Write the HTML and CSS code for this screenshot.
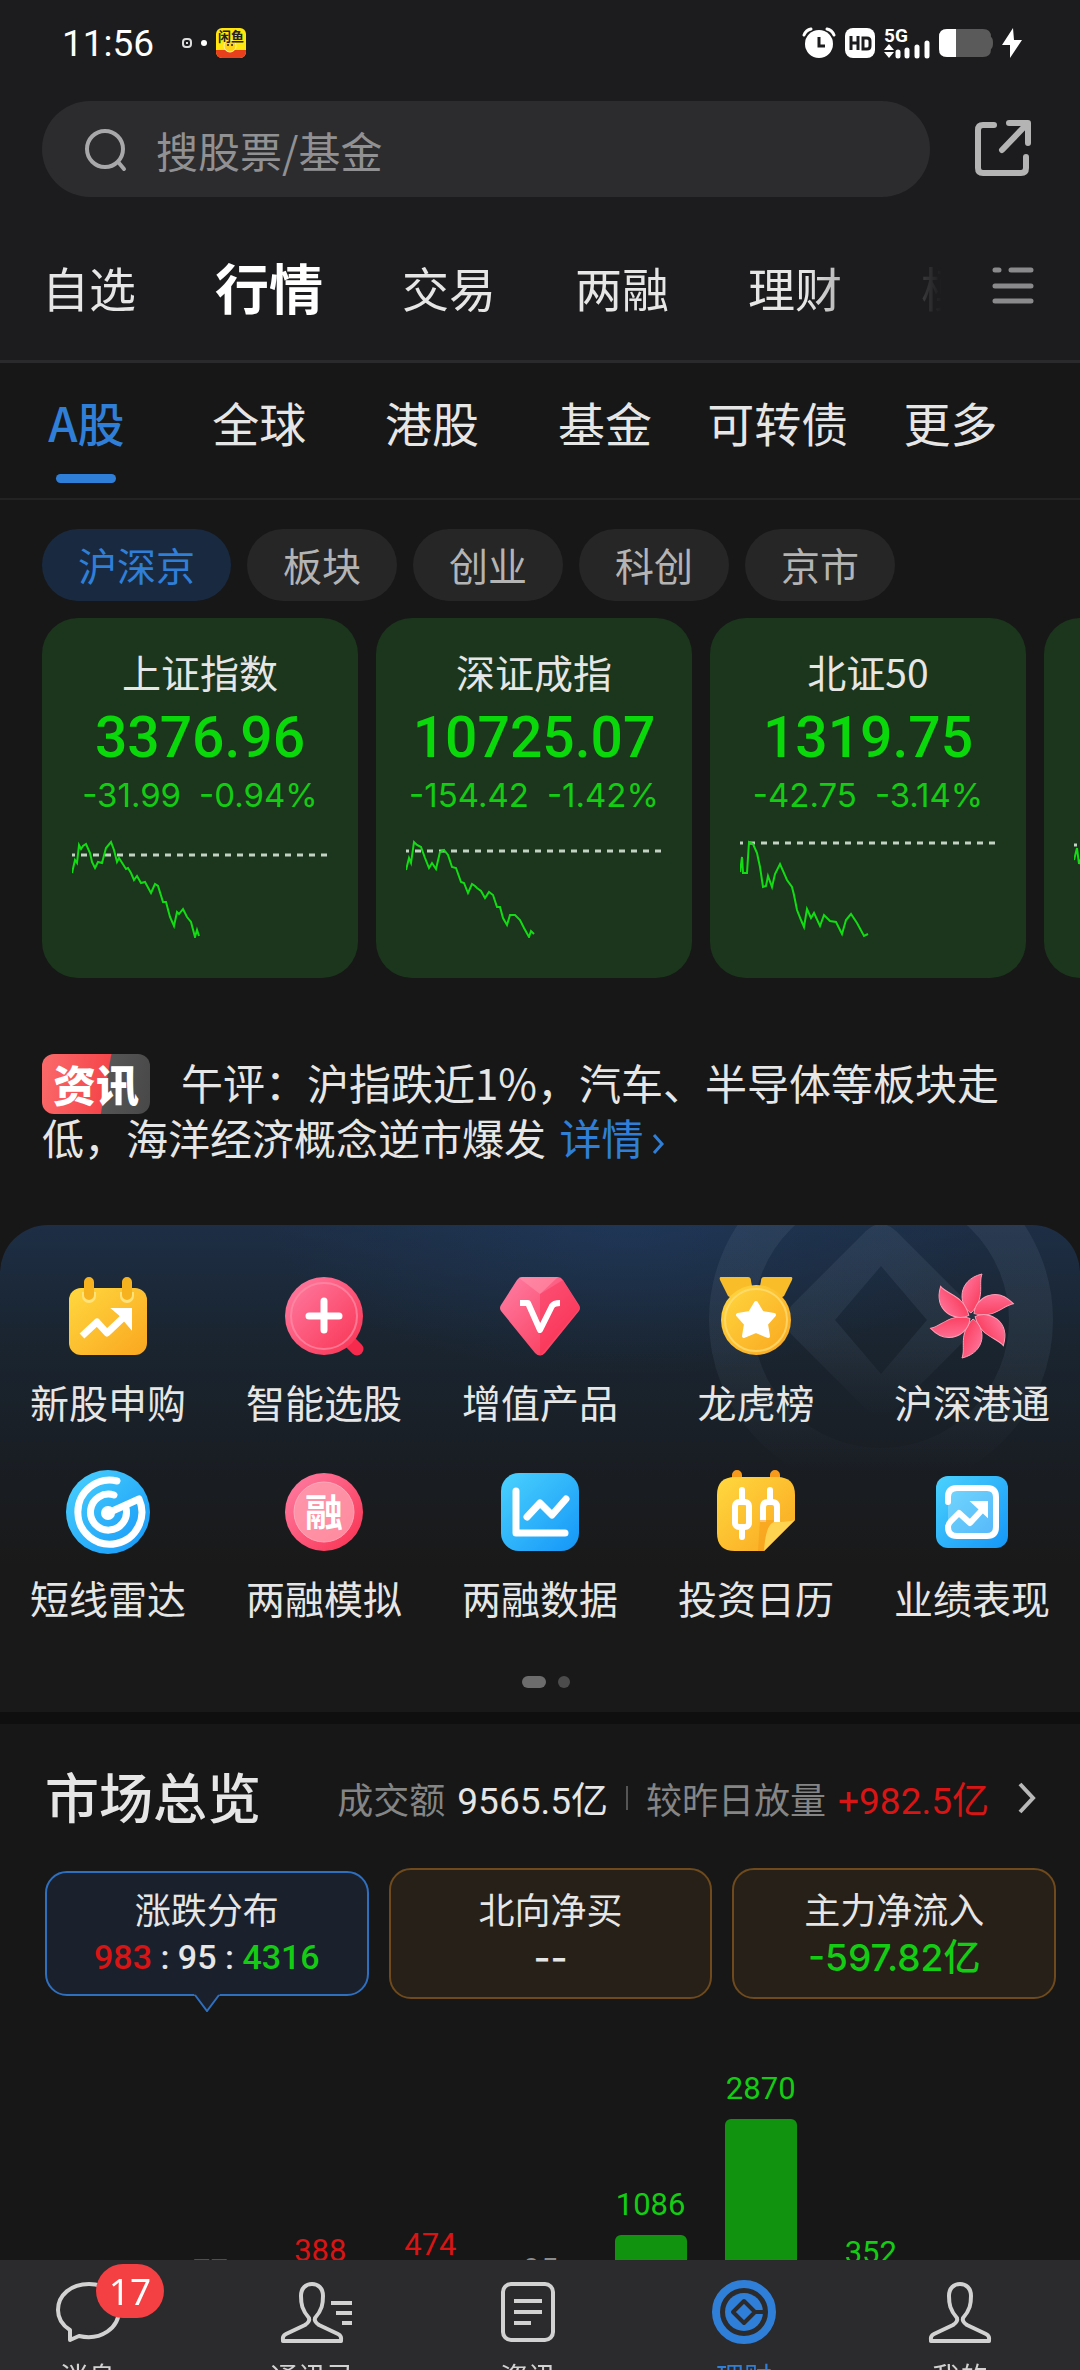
FILE: index.html
```html
<!DOCTYPE html>
<html lang="zh-CN">

<head>
    <meta charset="UTF-8">
    <meta name="viewport" content="width=device-width, initial-scale=1.0">
    <title>行情</title>
    <link rel="stylesheet" href="styles.css">
</head>

<body>
    <header class="header">
        <div class="status">
            <span class="time">11:56</span>
            <svg class="notice" width="68" height="30" viewBox="0 0 68 30">
                <rect x="1" y="11" width="8" height="8" rx="3" fill="none" stroke="#ddd" stroke-width="2" />
                <rect x="4" y="14" width="2" height="2" fill="#ddd" />
                <circle cx="22" cy="15" r="3" fill="#fff" />
                <rect x="34" y="0" width="30" height="30" rx="6" fill="#ffe60f" />
                <path d="M34 22h30v2a6 6 0 0 1-6 6H40a6 6 0 0 1-6-6z" fill="#e8401c" />
                <circle cx="48" cy="18" r="6" fill="#ffd21a" stroke="#fff6b0" />
                <circle cx="46" cy="17" r="1" fill="#222" />
                <circle cx="50" cy="17" r="1" fill="#222" />
                <text x="49" y="13" class="app-name">闲鱼</text>
            </svg>
            <div class="status-right">
                <svg width="34" height="32" viewBox="0 0 34 32">
                    <circle cx="17" cy="17" r="14" fill="#fff" />
                    <path d="M2 8Q4 3 9 2M32 8Q30 3 25 2" fill="none" stroke="#fff" stroke-width="3" stroke-linecap="round" />
                    <path d="M17 10v9h6" fill="none" stroke="#1c1c1e" stroke-width="3" />
                </svg>
                <svg width="30" height="30" viewBox="0 0 30 30">
                    <rect width="30" height="30" rx="8" fill="#fff" />
                    <path d="M6 8v14M13 8v14M6 15h7M18 10h4q3 0 3 3v5q0 3-3 3h-4z" fill="none" stroke="#1c1c1e" stroke-width="3" />
                </svg>
                <svg width="46" height="32" viewBox="0 0 46 32">
                    <text x="0" y="15" class="net">5G</text>
                    <path d="M0 23l5-6 5 6zM0 25l5 6 5-6z" fill="#fff" />
                    <path d="M14 25v4M23 23v6M33 20v9M43 16v13" stroke="#fff" stroke-width="5" stroke-linecap="round" />
                </svg>
                <svg width="54" height="28" viewBox="0 0 54 28">
                    <path d="M8 0h36q8 0 8 8q2 1 2 6t-2 6q0 8-8 8H8q-8 0-8-8V8q0-8 8-8z" fill="#5a5a5a" />
                    <path d="M17 0H8Q0 0 0 8v12q0 8 8 8h9z" fill="#fff" />
                </svg>
                <svg width="20" height="30" viewBox="0 0 20 30">
                    <path d="M11 0L0 17h8v13l12-18h-8z" fill="#fff" />
                </svg>
            </div>
        </div>

        <div class="search-row">
            <label class="search">
                <svg width="46" height="46" viewBox="0 0 46 46" fill="none" stroke="#a8a8aa" stroke-width="4" stroke-linecap="round">
                    <circle cx="23" cy="23" r="18" />
                    <path d="M37 37l5 6" />
                </svg>
                <input type="text" placeholder="搜股票/基金" aria-label="搜股票/基金">
            </label>
            <button class="icon-btn" aria-label="分享">
                <svg width="60" height="60" viewBox="0 0 60 60" fill="none" stroke="#b4b4b4" stroke-width="6" stroke-linecap="round" stroke-linejoin="round">
                    <path d="M21 6H10Q5 6 5 11v38q0 5 5 5h38q5 0 5-5V38" />
                    <path d="M36 4h19v20M54 5L29 31" />
                </svg>
            </button>
        </div>

        <nav class="tabs">
            <div class="tabs-list">
                <a href="#">自选</a>
                <a href="#" class="on">行情</a>
                <a href="#">交易</a>
                <a href="#">两融</a>
                <a href="#">理财</a>
                <a href="#">模拟</a>
            </div>
            <button class="icon-btn" aria-label="菜单">
                <svg width="42" height="42" viewBox="0 0 42 42" stroke="#8a8a8c" stroke-width="5" stroke-linecap="round">
                    <path d="M3 5h4M19 5h20M3 21h36M3 36h36" />
                </svg>
            </button>
        </nav>
    </header>

    <nav class="subtabs">
        <a href="#" class="on">A股</a>
        <a href="#">全球</a>
        <a href="#">港股</a>
        <a href="#">基金</a>
        <a href="#">可转债</a>
        <a href="#">更多</a>
    </nav>

    <div class="chips">
        <button class="on">沪深京</button>
        <button>板块</button>
        <button>创业</button>
        <button>科创</button>
        <button>京市</button>
    </div>

    <section class="cards">
        <div class="card">
            <h3>上证指数</h3>
            <p class="price">3376.96</p>
            <p class="change"><span>-31.99</span><span>-0.94%</span></p>
            <svg width="256" height="100" viewBox="0 0 256 100">
                <path class="base" d="M0 17H256" />
                <path class="line" d="M0 35L3 22L5 25L7 7L9 11L11 8L14 6L18 15L20 24L23 30L26 24L30 25L34 10L39 4L42 12L45 24L47 20L54 31L56 30L59 35L62 42L65 38L69 45L73 44L79 55L83 46L86 48L91 64L94 64L98 79L102 88L105 74L107 76L111 71L115 79L119 84L123 99L125 92L127 98" />
            </svg>
        </div>
        <div class="card">
            <h3>深证成指</h3>
            <p class="price">10725.07</p>
            <p class="change"><span>-154.42</span><span>-1.42%</span></p>
            <svg width="256" height="100" viewBox="0 0 256 100">
                <path class="base" d="M0 13H256" />
                <path class="line" d="M0 32L3 20L5 25L8 4L11 7L15 9L19 20L23 30L26 25L30 31L34 14L38 12L42 17L46 29L50 30L55 44L58 45L62 55L66 46L69 48L71 50L75 53L79 60L83 54L87 57L91 69L94 69L97 80L101 87L104 77L109 77L114 82L118 90L123 99L125 93L128 96" />
            </svg>
        </div>
        <div class="card">
            <h3>北证50</h3>
            <p class="price">1319.75</p>
            <p class="change"><span>-42.75</span><span>-3.14%</span></p>
            <svg width="256" height="100" viewBox="0 0 256 100">
                <path class="base" d="M0 5H256" />
                <path class="line" d="M0 34L2 19L3 35L7 35L9 4L13 6L17 15L20 29L23 49L26 48L28 38L32 49L35 36L40 26L47 42L52 49L54 57L57 72L61 82L64 89L67 71L71 80L74 75L80 88L84 77L90 83L96 84L102 96L106 82L111 76L117 85L124 98L128 96" />
            </svg>
        </div>
        <div class="card last">
            <svg width="256" height="100" viewBox="0 0 256 100">
                <path class="base" d="M0 7H256" />
                <path class="line" d="M0 22L3 10L5 26L8 18" />
            </svg>
        </div>
    </section>

    <p class="news"><span class="news-tag">资讯</span>午评：沪指跌近1%，汽车、半导体等板块走低，海洋经济概念逆市爆发 <a href="#">详情<svg width="16" height="26" viewBox="0 0 16 26" fill="none" stroke="#2f7fd9" stroke-width="3"><path d="M3 4l8 9-8 9" /></svg></a></p>

    <section class="panel">
        <svg class="watermark" width="350" height="350" viewBox="0 0 350 350">
            <defs>
                <linearGradient id="fade" x1="0" y1="0" x2="0" y2="1">
                    <stop offset="0" stop-color="#6a7f96" stop-opacity="0.17" />
                    <stop offset="0.6" stop-color="#6a7f96" stop-opacity="0.13" />
                    <stop offset="1" stop-color="#6a7f96" stop-opacity="0" />
                </linearGradient>
            </defs>
            <circle cx="175" cy="175" r="150" fill="none" stroke="url(#fade)" stroke-width="44" />
            <path d="M160 86Q175 72 190 86L264 160Q278 175 264 190L190 264Q175 278 160 264L86 190Q72 175 86 160ZM175 121L129 175L175 229L221 175Z" fill="url(#fade)" fill-rule="evenodd" />
        </svg>
        <svg class="defs" width="0" height="0">
            <defs>
                <linearGradient id="gold" x1="0" y1="0" x2="1" y2="1">
                    <stop offset="0" stop-color="#ffd83f" />
                    <stop offset="1" stop-color="#faa61f" />
                </linearGradient>
                <linearGradient id="pink" x1="0" y1="0" x2="1" y2="1">
                    <stop offset="0" stop-color="#ff7fa6" />
                    <stop offset="1" stop-color="#f9304f" />
                </linearGradient>
                <linearGradient id="blue" x1="0" y1="0" x2="1" y2="1">
                    <stop offset="0" stop-color="#4bd2fd" />
                    <stop offset="1" stop-color="#1496f8" />
                </linearGradient>
            </defs>
        </svg>
        <div class="menu">
            <a href="#">
                <svg class="ico" viewBox="0 0 96 96">
                    <rect x="9" y="20" width="78" height="67" rx="12" fill="url(#gold)" />
                    <path d="M24 24v4a5 5 0 0 0 10 0v-4M62 24v4a5 5 0 0 0 10 0v-4" fill="#ffd84a" stroke="#ffe27a" stroke-width="4" />
                    <path d="M29 14v13M67 14v13" stroke="#f7b21f" stroke-width="10" stroke-linecap="round" />
                    <path d="M22 68L37 54L47 65L67 46" fill="none" stroke="#fff" stroke-width="7" stroke-linejoin="round" />
                    <path d="M53 41H71V60L65 53L60 47Z" fill="#fff" stroke="#fff" stroke-width="2" />
                </svg>
                <span>新股申购</span>
            </a>
            <a href="#">
                <svg class="ico" viewBox="0 0 96 96">
                    <path d="M75 75L81 81" stroke="#f52a4c" stroke-width="13" stroke-linecap="round" />
                    <circle cx="48" cy="48" r="39" fill="url(#pink)" />
                    <circle cx="48" cy="48" r="33" fill="none" stroke="#ff8fa8" stroke-width="2" opacity="0.7" />
                    <path d="M48 33v29M33 48h30" stroke="#fff" stroke-width="7" stroke-linecap="round" />
                </svg>
                <span>智能选股</span>
            </a>
            <a href="#">
                <svg class="ico" viewBox="0 0 96 96">
                    <path d="M30 9H66Q69 9 71 12L87 37Q89 40 87 43L53 85Q48 90 43 85L9 43Q7 40 9 37L25 12Q27 9 30 9Z" fill="url(#pink)" />
                    <path d="M27 10Q28 9 30 9H66L48 26Z" fill="#ff9ab0" opacity="0.5" />
                    <path d="M48 26L71 12L88 40L48 88Z" fill="#f92b50" opacity="0.4" />
                    <path d="M28 35H36L48 62L60 38Q62 35 68 35" fill="none" stroke="#fff" stroke-width="6" stroke-linejoin="round" />
                </svg>
                <span>增值产品</span>
            </a>
            <a href="#">
                <svg class="ico" viewBox="0 0 96 96">
                    <path d="M13 9H40Q43 9 43 13L44 18L30 34L20 28L12 12Q11 9 13 9ZM83 9H56Q53 9 53 13L52 18L66 34L76 28L84 12Q85 9 83 9Z" fill="#f9bd2a" />
                    <circle cx="48" cy="52" r="35" fill="url(#gold)" />
                    <circle cx="48" cy="52" r="31" fill="none" stroke="#ffe07a" stroke-width="2" opacity="0.7" />
                    <path d="M48 35L54 45L66 47L58 56L60 68L48 63L36 68L38 56L30 47L42 45Z" fill="#fff" stroke="#fff" stroke-width="4" stroke-linejoin="round" />
                </svg>
                <span>龙虎榜</span>
            </a>
            <a href="#">
                <svg class="ico" viewBox="0 0 96 96">
                    <defs>
                        <path id="petal" d="M47 45C34 37 33 12 58 6C54 16 62 30 47 45Z" />
                    </defs>
                    <g fill="url(#pink)" stroke="#ff9db4" stroke-width="1">
                        <use href="#petal" />
                        <use href="#petal" transform="rotate(60 48 48)" />
                        <use href="#petal" transform="rotate(120 48 48)" />
                        <use href="#petal" transform="rotate(180 48 48)" />
                        <use href="#petal" transform="rotate(240 48 48)" />
                        <use href="#petal" transform="rotate(300 48 48)" />
                    </g>
                </svg>
                <span>沪深港通</span>
            </a>
            <a href="#">
                <svg class="ico" viewBox="0 0 96 96">
                    <circle cx="48" cy="48" r="42" fill="url(#blue)" />
                    <g fill="none" stroke="#fff" stroke-width="7" stroke-linecap="round" stroke-linejoin="round">
                        <path d="M57 17A32 32 0 1 0 79 35L48 49" />
                        <path d="M54 31A18 18 0 1 0 66 44" />
                    </g>
                    <circle cx="48" cy="49" r="7" fill="#fff" />
                </svg>
                <span>短线雷达</span>
            </a>
            <a href="#">
                <svg class="ico" viewBox="0 0 96 96">
                    <circle cx="48" cy="48" r="39" fill="url(#pink)" />
                    <circle cx="48" cy="48" r="30" fill="#ff9fb0" opacity="0.8" stroke="#ffb9c6" />
                    <text x="48" y="62" class="coin">融</text>
                </svg>
                <span>两融模拟</span>
            </a>
            <a href="#">
                <svg class="ico" viewBox="0 0 96 96">
                    <rect x="9" y="9" width="78" height="78" rx="18" fill="url(#blue)" />
                    <g fill="none" stroke="#fff" stroke-width="7" stroke-linecap="round" stroke-linejoin="round">
                        <path d="M24 27V69H73" />
                        <path d="M35 53L48 39L60 51L74 35" />
                    </g>
                </svg>
                <span>两融数据</span>
            </a>
            <a href="#">
                <svg class="ico" viewBox="0 0 96 96">
                    <path d="M29 11v8M67 11v8" stroke="#f79a1c" stroke-width="10" stroke-linecap="round" />
                    <path d="M27 13H69Q87 13 87 31V56L56 87H27Q9 87 9 69V31Q9 13 27 13Z" fill="url(#gold)" />
                    <path d="M34 26v12M34 64v9M62 26v12" stroke="#fff" stroke-width="6" stroke-linecap="round" />
                    <rect x="27" y="38" width="14" height="25" rx="4" fill="none" stroke="#fff" stroke-width="6" />
                    <path d="M55 58V43Q55 38 60 38H64Q69 38 69 43V58" fill="none" stroke="#fff" stroke-width="6" />
                    <path d="M52 56H66L56 87H50Z" fill="#f79f1c" opacity="0.6" />
                    <path d="M87 56L56 87Q58 57 68 58Q80 58 87 56Z" fill="#ffd352" />
                </svg>
                <span>投资日历</span>
            </a>
            <a href="#">
                <svg class="ico" viewBox="0 0 96 96">
                    <rect x="12" y="12" width="72" height="72" rx="12" fill="url(#blue)" />
                    <rect x="24" y="24" width="48" height="48" rx="9" fill="#fff" opacity="0.25" />
                    <path d="M24 38V33Q24 24 33 24H63Q72 24 72 33V63Q72 72 63 72H33Q24 72 24 63Q24 60 27 57L35 49L46 59L58 46" fill="none" stroke="#fff" stroke-width="6" stroke-linejoin="round" stroke-linecap="round" />
                    <path d="M48 38H63V52Z" fill="#fff" stroke="#fff" stroke-width="2" />
                </svg>
                <span>业绩表现</span>
            </a>
        </div>
        <div class="pager"><i class="on"></i><i></i></div>
    </section>

    <section class="market">
        <div class="market-head">
            <h2>市场总览</h2>
            <div class="market-info">
                <span class="label">成交额</span>
                <span>9565.5亿</span>
                <span class="sep"></span>
                <span class="label">较昨日放量</span>
                <span class="up">+982.5亿</span>
                <svg width="22" height="32" viewBox="0 0 22 32" fill="none" stroke="#b8b8b8" stroke-width="4"><path d="M4 2l13 14L4 30" /></svg>
            </div>
        </div>
        <div class="boxes">
            <div class="box on">
                <h4>涨跌分布</h4>
                <p><span class="up">983</span> : 95 : <span class="down">4316</span></p>
                <svg class="tail" width="26" height="18" viewBox="0 0 26 18"><path d="M0 0H26L13 17Z" fill="#1a212d" /><path d="M1 1L13 17L25 1" fill="none" stroke="#2f6fc0" stroke-width="2" /></svg>
            </div>
            <div class="box">
                <h4>北向净买</h4>
                <p class="wide">--</p>
            </div>
            <div class="box">
                <h4>主力净流入</h4>
                <p class="wide down">-597.82亿</p>
            </div>
        </div>
        <div class="chart">
            <div class="col up"><span>44</span><i style="height:3px"></i></div>
            <div class="col up"><span>77</span><i style="height:5px"></i></div>
            <div class="col up"><span>388</span><i style="height:25px"></i></div>
            <div class="col up"><span>474</span><i style="height:31px"></i></div>
            <div class="col flat"><span>95</span><i style="height:6px"></i></div>
            <div class="col down"><span>1086</span><i style="height:71px"></i></div>
            <div class="col down"><span>2870</span><i style="height:187px"></i></div>
            <div class="col down"><span>352</span><i style="height:23px"></i></div>
            <div class="col down"><span>8</span><i style="height:1px"></i></div>
        </div>
    </section>

    <nav class="tabbar">
        <a href="#" class="msg">
            <svg class="tab-ico" viewBox="0 0 72 72"><path d="M18 54V64L27 60C49 65 67 52 67 34C67 18 54 8 37 8C19 8 6 19 6 34C6 42 10 49 18 54Z" /></svg>
            <b class="badge">17</b>
            <span>消息</span>
        </a>
        <a href="#">
            <svg class="tab-ico" viewBox="0 0 72 72">
                <path d="M33 42C26 34 25 28 25 20C25 12 30 8 36 8S47 12 47 20C47 28 46 34 39 42C38 45 40 47 43 49L62 58Q66 60 65 65H7Q6 60 10 58L29 49C32 47 34 45 33 42Z" />
                <path d="M55 27H76M60 37H76M66 47H76" />
            </svg>
            <span>通讯录</span>
        </a>
        <a href="#">
            <svg class="tab-ico" viewBox="0 0 72 72">
                <rect x="11" y="8" width="50" height="56" rx="8" />
                <path d="M22 25H50M22 36H50M22 47H39" />
            </svg>
            <span>资讯</span>
        </a>
        <a href="#" class="on">
            <svg class="tab-ico" viewBox="0 0 72 72">
                <circle cx="36" cy="36" r="28" stroke-width="8" />
                <circle cx="36" cy="36" r="19" fill="#2f7fd9" stroke="none" />
                <path d="M36 25L47 36L36 47L25 36ZM46 36H57" stroke="#2b2b2d" stroke-width="4" />
            </svg>
            <span>理财</span>
        </a>
        <a href="#">
            <svg class="tab-ico" viewBox="0 0 72 72"><path d="M33 42C26 34 25 28 25 20C25 12 30 8 36 8S47 12 47 20C47 28 46 34 39 42C38 45 40 47 43 49L62 58Q66 60 65 65H7Q6 60 10 58L29 49C32 47 34 45 33 42Z" /></svg>
            <span>我的</span>
        </a>
    </nav>
</body>

</html>
```
FILE: styles.css
```css
* {
    box-sizing: border-box;
    margin: 0;
    padding: 0;
}

body {
    font-family: "Noto Sans CJK SC", sans-serif;
    background-color: #171717;
    color: #e6e6e6;
    overflow: hidden;
}

a {
    color: inherit;
    text-decoration: none;
}

button {
    font-family: inherit;
    color: inherit;
    background: none;
    border: none;
    cursor: pointer;
}

svg {
    flex: none;
}

.up {
    color: #d81414;
}

.down {
    color: #14cc14;
}

/* header */
.header {
    background-color: #1c1c1e;
    border-bottom: 3px solid #2a2a2c;
    padding-bottom: 14px;
}

.status {
    display: flex;
    align-items: center;
    height: 86px;
    padding: 0 58px 0 62px;
}

.time {
    font-family: Roboto, sans-serif;
    font-size: 37px;
    color: #fff;
}

.notice {
    margin-left: 28px;
}

.app-name {
    font-size: 13px;
    font-weight: bold;
    text-anchor: middle;
    fill: #222;
}

.status-right {
    display: flex;
    align-items: center;
    gap: 9px;
    margin-left: auto;
}

.net {
    font-family: Roboto, sans-serif;
    font-size: 19px;
    font-weight: bold;
    fill: #fff;
}

.search-row {
    display: flex;
    align-items: center;
    gap: 43px;
    padding: 15px 47px 0 42px;
}

.search {
    display: flex;
    align-items: center;
    flex: 1;
    height: 96px;
    padding: 0 40px;
    gap: 28px;
    border-radius: 48px;
    background-color: #2c2c2e;
}

.search input {
    flex: 1;
    min-width: 0;
    border: none;
    outline: none;
    background: none;
    color: #e6e6e6;
    font-family: inherit;
    font-size: 42px;
}

.search input::placeholder {
    color: #919193;
}

.icon-btn {
    display: flex;
}

.tabs {
    display: flex;
    align-items: center;
    justify-content: space-between;
    height: 120px;
    margin-top: 29px;
    padding: 0 46px 0 42px;
}

.tabs-list {
    display: flex;
    align-items: center;
    flex: 1;
    gap: 79px;
    margin-right: 50px;
    overflow: hidden;
    white-space: nowrap;
    font-size: 47px;
    -webkit-mask-image: linear-gradient(to right, #000 85%, transparent);
    mask-image: linear-gradient(to right, #000 85%, transparent);
}

.tabs-list .on {
    font-size: 54px;
    font-weight: bold;
    color: #fff;
}

.subtabs {
    display: grid;
    grid-template-columns: repeat(6, 1fr);
    padding: 29px 43px 15px 0;
    border-bottom: 2px solid #232324;
    font-size: 47px;
    line-height: 60px;
    text-align: center;
}

.subtabs a::after {
    content: "";
    display: block;
    width: 60px;
    height: 9px;
    margin: 22px auto 0;
    border-radius: 5px;
}

.subtabs .on {
    color: #2f7fd9;
    font-weight: 500;
}

.subtabs .on::after {
    background-color: #2f7fd9;
}

.chips {
    display: flex;
    gap: 16px;
    padding: 29px 42px 0;
}

.chips button {
    height: 72px;
    padding: 0 36px 3px;
    border-radius: 36px;
    background-color: #262627;
    color: #b4b4b4;
    font-size: 39px;
}

.chips .on {
    background-color: #192a40;
    color: #2f7fd9;
}

/* index cards */
.cards {
    display: flex;
    gap: 18px;
    padding: 17px 0 0 42px;
    overflow: hidden;
}

.card {
    flex: none;
    display: flex;
    flex-direction: column;
    align-items: center;
    width: 316px;
    padding: 25px 0 40px;
    border-radius: 36px;
    background-color: #1b361c;
}

.card h3 {
    font-size: 39px;
    font-weight: normal;
    line-height: 56px;
}

.price {
    font-family: Roboto, sans-serif;
    font-size: 57px;
    font-weight: 500;
    line-height: 78px;
    color: #0bd80b;
}

.change {
    display: flex;
    gap: 18px;
    font-family: Inter, sans-serif;
    font-size: 33px;
    line-height: 36px;
    color: #14cc14;
}

.card svg {
    margin-top: 25px;
}

.card.last {
    justify-content: flex-end;
}

.base {
    stroke: #c4d2c4;
    stroke-width: 3;
    stroke-dasharray: 6 6;
    stroke-dashoffset: 3;
}

.line {
    fill: none;
    stroke: #14dc14;
    stroke-width: 2;
}

.news {
    padding: 76px 42px 61px;
    font-size: 42px;
    line-height: 55px;
}

.news-tag {
    display: inline-block;
    width: 108px;
    height: 60px;
    margin: 0 31px -5px 0;
    border-radius: 12px;
    background: linear-gradient(100deg, #fb6a6a, #f5464b 58%, #555 59%, #484848);
    color: #fff;
    font-size: 43px;
    font-weight: 900;
    line-height: 58px;
    text-align: center;
    vertical-align: top;
}

.news a {
    margin-left: 4px;
    color: #2f7fd9;
}

.news svg {
    margin-left: 8px;
    vertical-align: -2px;
}

/* shortcut menu */
.panel {
    position: relative;
    padding: 43px 0 24px;
    border-radius: 48px 48px 0 0;
    background: radial-gradient(ellipse 360px 150px at 58% 0, rgba(34, 66, 112, 0.4), transparent), linear-gradient(#1d2e45, #1a2531 22%, #191e24 48%, #191919 70%);
    border-bottom: 12px solid #0f0f0f;
    overflow: hidden;
}

.watermark {
    position: absolute;
    top: -80px;
    right: 24px;
}

.defs {
    position: absolute;
}

.menu {
    position: relative;
    display: grid;
    grid-template-columns: repeat(5, 1fr);
    row-gap: 43px;
}

.menu a {
    display: flex;
    flex-direction: column;
    align-items: center;
    gap: 17px;
    font-size: 39px;
    line-height: 40px;
}

.ico {
    width: 96px;
    height: 96px;
}

.coin {
    font-size: 38px;
    font-weight: bold;
    text-anchor: middle;
    fill: #fff;
}

.pager {
    display: flex;
    justify-content: center;
    gap: 12px;
    margin-top: 59px;
    padding-left: 12px;
}

.pager i {
    width: 12px;
    height: 12px;
    border-radius: 6px;
    background-color: #4c4c4c;
}

.pager .on {
    width: 24px;
    background-color: #6c6c6c;
}

/* market overview */
.market {
    padding: 34px 24px 0 45px;
}

.market-head {
    display: flex;
    align-items: center;
    justify-content: space-between;
    height: 80px;
    padding-right: 18px;
}

.market-head h2 {
    padding-bottom: 6px;
    font-size: 54px;
    font-weight: 500;
}

.market-info {
    display: flex;
    align-items: center;
    gap: 12px;
    font-family: Roboto, "Noto Sans CJK SC", sans-serif;
    font-size: 37px;
}

.market-info .label {
    color: #858585;
    font-size: 36px;
}

.market-info svg {
    margin-left: 15px;
}

.sep {
    width: 2px;
    height: 24px;
    margin: 0 6px;
    background-color: #555;
}

.boxes {
    display: flex;
    align-items: center;
    gap: 20px;
    margin-top: 30px;
}

.box {
    position: relative;
    flex: 1;
    padding: 14px 0 15px;
    border: 2px solid #6e4a1c;
    border-radius: 22px;
    background-color: #262018;
    text-align: center;
    line-height: 49px;
}

.box.on {
    padding: 11px 0 12px;
    border-color: #2f6fc0;
    background-color: #1a212d;
}

.box h4 {
    font-size: 36px;
    font-weight: normal;
}

.box p {
    font-family: Roboto, "Noto Sans CJK SC", sans-serif;
    font-size: 34px;
    font-weight: 500;
}

.box .wide {
    font-family: Inter, "Noto Sans CJK SC", sans-serif;
    font-size: 37px;
}

.tail {
    position: absolute;
    top: 100%;
    left: 50%;
    margin-left: -13px;
}

.chart {
    display: grid;
    grid-template-columns: repeat(9, 1fr);
    align-items: end;
    height: 307px;
    padding-right: 20px;
}

.col {
    display: flex;
    flex-direction: column;
    align-items: center;
    gap: 12px;
    font-family: Roboto, sans-serif;
    font-size: 31px;
    line-height: 36px;
}

.col i {
    width: 72px;
    border-radius: 6px 6px 0 0;
    background-color: #11930f;
}

.col.up i {
    background-color: #b01212;
}

.col.flat {
    color: #8c8c8c;
}

.col.flat i {
    background-color: #6c6c6c;
}

/* bottom bar */
.tabbar {
    position: fixed;
    left: 0;
    right: 0;
    bottom: 0;
    display: grid;
    grid-template-columns: repeat(5, 1fr);
    height: 110px;
    margin-left: -12px;
    padding: 16px 12px 0 0;
    background-color: #2b2b2d;
    color: #d2d2d2;
    font-size: 28px;
    line-height: 36px;
}

.tabbar a {
    position: relative;
    display: flex;
    flex-direction: column;
    align-items: center;
    gap: 10px;
}

.tabbar .msg {
    padding-right: 16px;
}

.tabbar .on {
    color: #2f7fd9;
}

.tab-ico {
    width: 72px;
    height: 72px;
    overflow: visible;
    fill: none;
    stroke: currentColor;
    stroke-width: 4;
    stroke-linejoin: round;
}

.badge {
    position: absolute;
    top: -12px;
    left: 50%;
    width: 68px;
    height: 54px;
    border-radius: 27px;
    background-color: #f43f43;
    color: #fff;
    font-family: "Noto Sans", sans-serif;
    font-size: 37px;
    font-weight: normal;
    line-height: 54px;
    text-align: center;
}
```
